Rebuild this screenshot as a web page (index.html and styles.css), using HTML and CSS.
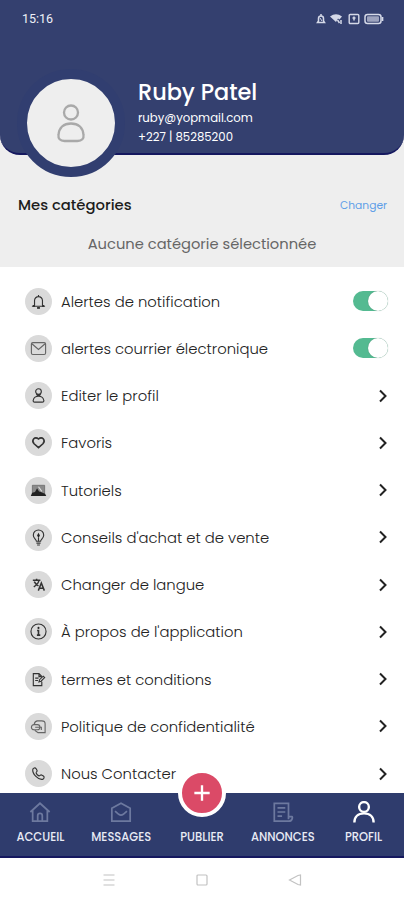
FILE: index.html
```html
<!DOCTYPE html>
<html lang="fr">
<head>
  <meta charset="UTF-8">
  <title>Profil</title>
  <meta name="viewport" content="width=device-width, initial-scale=1.0" />
  <link rel="stylesheet" href="styles.css">
</head>
<body>

<div class="app">
  <header class="header">
    <div class="statusbar">
      <span class="time">15:16</span>
      <div class="status-icons">
        <svg width="10" height="12" viewBox="0 0 10 12"><path d="M5 1v1.500M2.500 8V5.500a2.500 2.500 0 0 1 5 0V8l1 1.500h-7z" fill="none" stroke="currentColor" stroke-width="1.5"/><path d="M4 5l2 3" stroke="currentColor"/></svg>
        <svg width="13" height="12" viewBox="0 0 13 12"><path d="M0 3.500Q6 -1 12 3.500L9.500 6.500 8 5.500 6 9z" fill="currentColor"/><path d="M7.500 7l2 3M11 7v4" stroke="currentColor" stroke-width="1.500"/></svg>
        <svg width="12" height="12" viewBox="0 0 12 12"><rect x="1.200" y="1.500" width="9.600" height="9" rx="1" fill="none" stroke="currentColor" stroke-width="1.400"/><path d="M6 3.500v4M4.500 5h3" stroke="currentColor" stroke-width="1.500"/></svg>
        <svg width="20" height="12" viewBox="0 0 20 12"><rect x="1" y="1.500" width="16" height="9" rx="2.500" fill="none" stroke="currentColor" stroke-width="1.500"/><rect x="3" y="3.300" width="12" height="5.400" rx="1" fill="currentColor" opacity=".65"/><path d="M18.500 4v4" stroke="currentColor" stroke-width="1.700"/></svg>
      </div>
    </div>
    <div class="user">
      <div class="avatar">
        <svg width="30" height="40" viewBox="0 0 30 40" fill="none" stroke="#a9a9a9" stroke-width="2.300"><circle cx="15" cy="9.500" r="7"/><path d="M8.500 38C4 38 2 35.500 2.500 32 3 24.500 8 20.500 15 20.500s12 4 12.500 11.500c.5 3.500-1.500 6-6 6z"/></svg>
      </div>
      <div class="user-info">
        <h1>Ruby Patel</h1>
        <p>ruby@yopmail.com</p>
        <p>+227 | 85285200</p>
      </div>
    </div>
  </header>

  <section class="categories">
    <div class="categories-top">
      <h2>Mes catégories</h2>
      <a class="change">Changer</a>
    </div>
    <p class="empty">Aucune catégorie sélectionnée</p>
  </section>

  <main class="menu">
    <div class="row">
      <span class="icon"><svg viewBox="0 0 18 18"><path d="M4.800 13V8a4.200 4.200 0 0 1 8.400 0v5l1.300 1h-11zM9 2V4"/><path d="M7.500 15.800h3" stroke-width="2"/><path d="M2.800 13.800h2.400M12.800 13.800h2.400" stroke-width="2"/></svg></span>
      <span class="label">Alertes de notification</span>
      <span class="toggle"></span>
    </div>
    <div class="row">
      <span class="icon soft"><svg viewBox="0 0 18 18"><rect x="1.500" y="2.800" width="15" height="12.500" rx="1.500"/><path d="M2 4l7 6 7-6"/></svg></span>
      <span class="label">alertes courrier électronique</span>
      <span class="toggle"></span>
    </div>
    <div class="row">
      <span class="icon"><svg viewBox="0 0 18 18"><circle cx="9" cy="4.800" r="3"/><path d="M6.500 7.500l5 2.500M11.500 7.500l-5 2.500M5 16c-1.500 0-2-1-1.500-2.300C4.200 11 6 9.800 9 9.800s4.800 1.200 5.500 3.900C15 15 14.500 16 13 16z"/></svg></span>
      <span class="label">Editer le profil</span>
      <svg class="arrow" viewBox="0 0 10 14"><path d="M2 1.500l5.500 5.500L2 12.500"/></svg>
    </div>
    <div class="row">
      <span class="icon"><svg viewBox="0 0 18 18"><path d="M9 14.500L4.300 10.300C1 6.500 5.200 1.800 9 5.300c3.800-3.500 8 1.200 4.700 5z" stroke-width="1.700"/></svg></span>
      <span class="label">Favoris</span>
      <svg class="arrow" viewBox="0 0 10 14"><path d="M2 1.500l5.500 5.500L2 12.500"/></svg>
    </div>
    <div class="row">
      <span class="icon"><svg viewBox="0 0 18 18"><path d="M2.500 3.500h13v9h-13z" fill="#8a8a8a" stroke="#666" stroke-width=".8"/><path d="M.8 14.800l1.500-3.300 3-1 2.200-4 2 3.500 2 .5 3 1.500 1.500.5 1.200 2.300z" fill="#222" stroke="none"/><path d="M9 5l3.500 5" stroke="#ddd"/></svg></span>
      <span class="label">Tutoriels</span>
      <svg class="arrow" viewBox="0 0 10 14"><path d="M2 1.500l5.500 5.500L2 12.500"/></svg>
    </div>
    <div class="row">
      <span class="icon"><svg viewBox="0 0 18 18"><path d="M6.800 13c0-2-3.300-3-3.300-6.500a5.500 5.500 0 0 1 11 0c0 3.500-3.300 4.500-3.300 6.500zM6.800 15h4.400M7.500 17h3"/><path d="M9 4l1.500 3L9 9.500 7.500 7z" fill="#222" stroke="none"/><path d="M9 9v4"/></svg></span>
      <span class="label">Conseils d'achat et de vente</span>
      <svg class="arrow" viewBox="0 0 10 14"><path d="M2 1.500l5.500 5.500L2 12.500"/></svg>
    </div>
    <div class="row">
      <span class="icon"><svg viewBox="0 0 18 18"><path d="M3 4.500h8M7 2.800v1.700M9.500 4.500C9 7.500 6.500 10 4 11.500M4.500 6C5.500 8 7 9.500 9 10.500M8.800 15.500l3.200-8 3.200 8M10 13h4" stroke-width="1.600"/></svg></span>
      <span class="label">Changer de langue</span>
      <svg class="arrow" viewBox="0 0 10 14"><path d="M2 1.500l5.500 5.500L2 12.500"/></svg>
    </div>
    <div class="row">
      <span class="icon"><svg viewBox="0 0 18 18"><circle cx="9" cy="9" r="8"/><path d="M7.500 8H9v4.500M7.300 12.800h3.600" stroke-width="1.700"/><circle cx="9" cy="5.200" r="1.100" fill="#222" stroke="none"/></svg></span>
      <span class="label">À propos de l'application</span>
      <svg class="arrow" viewBox="0 0 10 14"><path d="M2 1.500l5.500 5.500L2 12.500"/></svg>
    </div>
    <div class="row">
      <span class="icon"><svg viewBox="0 0 18 18"><path d="M12.500 11.500v4H3.500V2.800h6l3 3M9.500 2.800V6h3M5.500 7.500H9M5.500 10h3M9.500 11.500l.6-2.300L14 5.500 15.500 7l-3.800 3.800z"/></svg></span>
      <span class="label">termes et conditions</span>
      <svg class="arrow" viewBox="0 0 10 14"><path d="M2 1.500l5.500 5.500L2 12.500"/></svg>
    </div>
    <div class="row">
      <span class="icon soft"><svg viewBox="0 0 18 18"><path d="M4.500 6.500C5 4 6 3 8 3h4.500C15 3 16 4 16 6v9.500H8.500L5 13"/><rect x="1.500" y="7" width="9" height="5.500" rx="2.700"/><path d="M5.500 9.800h6.500v3"/></svg></span>
      <span class="label">Politique de confidentialité</span>
      <svg class="arrow" viewBox="0 0 10 14"><path d="M2 1.500l5.500 5.500L2 12.500"/></svg>
    </div>
    <div class="row">
      <span class="icon"><svg viewBox="0 0 18 18"><path d="M3 4.500C3.500 3 5.500 2.500 6.500 4l1 1.800c.5 1.200-1.300 1.700-1 2.700.5 1.500 1.700 2.500 3 3 1 .3 1.500-1.500 2.700-1l2 1.200c1.300 1 .8 3-1 3.500C8.500 16 2 9 3 4.500z"/></svg></span>
      <span class="label">Nous Contacter</span>
      <svg class="arrow" viewBox="0 0 10 14"><path d="M2 1.500l5.500 5.500L2 12.500"/></svg>
    </div>
  </main>

  <nav class="tabs">
    <a class="tab">
      <svg viewBox="0 0 24 24"><path d="M1.500 12L12 2.500 22.500 12M4 10v12h16V10M9.500 21.500V16a2.500 2.500 0 0 1 5 0v5.500"/></svg>
      <span>ACCUEIL</span>
    </a>
    <a class="tab">
      <svg viewBox="0 0 24 24"><path d="M2 22V8l10-5.500L22 8v14zM5.500 11l4 3.500c1.500 1 3.500 1 5 0l4-3.500"/></svg>
      <span>MESSAGES</span>
    </a>
    <a class="tab publish">
      <span class="plus"><svg viewBox="0 0 20 20"><path d="M10 1.500v17M1.500 10h17"/></svg></span>
      <span>PUBLIER</span>
    </a>
    <a class="tab">
      <svg viewBox="0 0 24 24"><path d="M18 17V2.500H2.500V22h16c4 0 4-5 3.500-5h-4v3M6 7.500h8.500M6 12h8.500M6 16.500h5"/></svg>
      <span>ANNONCES</span>
    </a>
    <a class="tab active">
      <svg viewBox="0 0 24 24"><circle cx="12" cy="6.500" r="5.300"/><path d="M1.500 23.500c0-6 4-10 10.500-10s10.500 4 10.500 10"/></svg>
      <span>PROFIL</span>
    </a>
  </nav>

  <footer class="sysnav">
    <svg viewBox="0 0 14 14"><path d="M1.500 2h11M1.500 7h11M1.500 12h11"/></svg>
    <svg viewBox="0 0 14 14"><rect x="2" y="2" width="10" height="10" rx="1"/></svg>
    <svg viewBox="0 0 14 14"><path d="M12.500 2v10L10 11.500 1.500 7 10 2.500z"/></svg>
  </footer>
</div>

</body>
</html>
```
FILE: styles.css
```css
* {
  box-sizing: border-box;
}

body {
  margin: 0;
  font-family: Poppins, Inter, sans-serif;
  background: #fff;
}

h1, h2, p {
  margin: 0;
}

svg {
  display: block;
  flex: none;
}

.app {
  display: flex;
  flex-direction: column;
  height: 900px;
  overflow: hidden;
  background: #eee;
}

.header {
  flex: none;
  height: 155px;
  background: #34406f;
  border-bottom: 2px solid #15185f;
  border-radius: 0 0 20px 20px;
  color: #fff;
}

.statusbar {
  display: flex;
  justify-content: space-between;
  align-items: center;
  height: 37px;
  padding: 0 20px 0 22px;
  color: #d5d9e8;
}

.time {
  font-family: Roboto, sans-serif;
  font-size: 12.5px;
  font-weight: 400;
  color: #eef0f7;
}

.status-icons {
  display: flex;
  gap: 4.5px;
}

.user {
  display: flex;
  padding: 32px 0 0 17px;
}

.avatar {
  display: flex;
  align-items: center;
  justify-content: center;
  width: 108px;
  height: 108px;
  background: #eee;
  border: 10px solid #313e70;
  border-radius: 50%;
}

.user-info {
  padding: 7px 0 0 13px;
  white-space: nowrap;
}

.user-info h1 {
  font-size: 22.4px;
  line-height: 33px;
  font-weight: 500;
}

.user-info p {
  font-size: 11.7px;
  line-height: 19px;
  font-weight: 400;
}

.categories {
  flex: none;
  height: 112px;
  padding-top: 35px;
}

.categories-top {
  display: flex;
  justify-content: space-between;
  align-items: center;
  height: 29px;
  padding: 0 17px 0 18px;
}

.categories h2 {
  font-size: 14.8px;
  font-weight: 500;
  color: #1c1c1c;
}

.change {
  padding-top: 2px;
  font-size: 10.7px;
  color: #5f9ee8;
}

.empty {
  margin-top: 13px;
  font-size: 14.7px;
  line-height: 24px;
  text-align: center;
  color: #666;
}

.menu {
  flex: none;
  height: 526px;
  padding-top: 10.5px;
  overflow: hidden;
  background: #fff;
}

.row {
  display: flex;
  align-items: center;
  height: 47.25px;
  padding: 0 16px 0 25px;
}

.icon {
  display: flex;
  align-items: center;
  justify-content: center;
  width: 27px;
  height: 27px;
  margin-right: 9px;
  background: #dadada;
  border-radius: 50%;
}

.icon svg {
  width: 17px;
  height: 17px;
  fill: none;
  stroke: #333;
  stroke-width: 1.2;
}

.icon.soft svg {
  stroke: #666;
}

.label {
  flex: 1;
  padding-top: 1px;
  font-size: 14.8px;
  font-weight: 300;
  color: #222;
  white-space: nowrap;
}

.toggle {
  width: 35px;
  height: 20px;
  background: #54ba91;
  border-radius: 10px;
}

.toggle::after {
  content: "";
  display: block;
  width: 20px;
  height: 20px;
  margin-left: 15px;
  background: #fff;
  border-radius: 50%;
  box-shadow: 0 0 1px rgba(0, 0, 0, 0.3);
}

.arrow {
  width: 10px;
  height: 14px;
  fill: none;
  stroke: #222;
  stroke-width: 2;
}

.tabs {
  flex: none;
  display: flex;
  height: 65px;
  background: #2f3c6d;
  border-bottom: 2px solid #15185f;
}

.tab {
  position: relative;
  display: flex;
  flex: 1;
  flex-direction: column;
  align-items: center;
  padding-top: 8px;
  font-size: 11.5px;
  line-height: 16px;
  font-weight: 500;
  color: #e9ebf5;
}

.tab > svg {
  width: 22px;
  height: 22px;
  margin-bottom: 6px;
  fill: none;
  stroke: #6d799f;
  stroke-width: 1.9;
}

.tab.active > svg {
  stroke: #fff;
  stroke-width: 2.6;
}

.publish {
  padding-top: 36px;
}

/* floating button over the tab bar */
.plus {
  position: absolute;
  top: -24px;
  display: flex;
  align-items: center;
  justify-content: center;
  width: 48px;
  height: 48px;
  background: #db4a67;
  border: 4px solid #fff;
  border-radius: 50%;
}

.plus svg {
  width: 18px;
  height: 18px;
  stroke: #fff;
  stroke-width: 2.6;
}

.sysnav {
  flex: 1;
  display: flex;
  justify-content: center;
  gap: 79px;
  padding-top: 15px;
  background: #fff;
}

.sysnav svg {
  width: 14px;
  height: 14px;
  fill: none;
  stroke: #c2c2c2;
  stroke-width: 1.2;
}
```
